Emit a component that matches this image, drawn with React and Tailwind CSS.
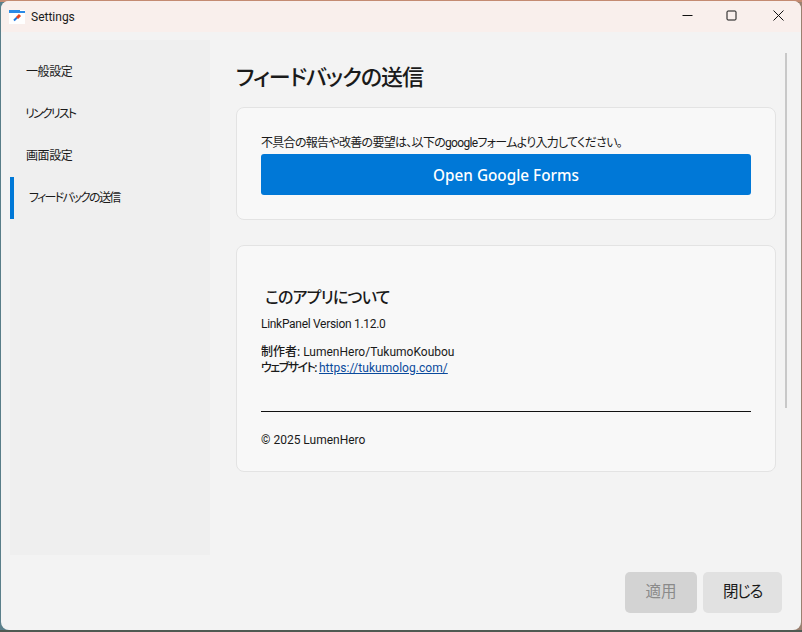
const font = 'Roboto, "Noto Sans CJK JP", sans-serif';

function NavItem({ label, active, tracking, pad }) {
  return (
    <div className="relative h-[42px] flex items-center">
      {active && <div className="absolute left-0 top-0 h-full w-1 bg-[#0078d7]" />}
      <span className={`text-[12px] text-[#1a1a1a] ${tracking} ${pad}`}>{label}</span>
    </div>
  );
}

export default function App() {
  return (
    <div
      className="w-[802px] h-[632px] bg-[linear-gradient(180deg,#c48b72_0,#c48b72_2px,transparent_2px,transparent_630px,#4f5a52_630px),linear-gradient(90deg,#5a7f8a_50%,#9a8070_50%)] p-px pb-[2px] overflow-hidden [font-feature-settings:'palt']"
      style={{ fontFamily: font }}
    >
      <div className="w-full h-full rounded-[8px] overflow-hidden bg-[#f3f3f3] flex flex-col">
        {/* Title bar */}
        <div className="h-[31px] shrink-0 bg-[#f9efec] flex items-center pl-[8px]">
          <svg width="16" height="14" viewBox="0 0 16 14" className="mr-[6px]">
            <rect x="0" y="0" width="16" height="14" fill="#fff" />
            <rect x="0" y="0" width="16" height="3" fill="#2b8ae6" />
            <rect x="11" y="0" width="5" height="1" fill="#fff" />
            <path d="M5 10.5 L8 7.5" stroke="#1e78e0" strokeWidth="2" />
            <path d="M8 8 L11 5" stroke="#e8451f" strokeWidth="3" />
          </svg>
          <span className="text-[12px] text-[#1a1a1a]">Settings</span>
          <div className="ml-auto flex items-center h-full -translate-y-px">
            <div className="w-[45px] h-full flex items-center justify-center -translate-x-px">
              <svg width="11" height="11" viewBox="0 0 11 11"><path d="M0.5 5.5H10.5" stroke="#111" strokeWidth="1" /></svg>
            </div>
            <div className="w-[45px] h-full flex items-center justify-center -translate-x-[2px]">
              <svg width="11" height="11" viewBox="0 0 11 11"><rect x="1" y="1" width="9" height="9" rx="1" fill="none" stroke="#111" strokeWidth="1" /></svg>
            </div>
            <div className="w-[45px] h-full flex items-center justify-center">
              <svg width="11" height="11" viewBox="0 0 11 11"><path d="M0.5 0.5L10.5 10.5M10.5 0.5L0.5 10.5" stroke="#111" strokeWidth="1" /></svg>
            </div>
          </div>
        </div>

        {/* Body */}
        <div className="flex-1 flex min-h-0 relative">
          <div className="w-[200px] h-[515px] shrink-0 ml-[9px] mt-[8px] bg-[#efefef] pt-[11px]">
            <NavItem label="一般設定" tracking="tracking-[-0.4px]" pad="pl-[16px]" />
            <NavItem label="リンクリスト" tracking="tracking-[-1.8px]" pad="pl-[15px]" />
            <NavItem label="画面設定" tracking="tracking-[-0.4px]" pad="pl-[16px]" />
            <NavItem label="フィードバックの送信" tracking="tracking-[-1.7px]" pad="pl-[19px]" active />
          </div>

          <div className="flex-1 flex flex-col min-w-0 pl-[26px] pr-[25px]">
            <h1 className="text-[22px] leading-[30px] font-medium text-[#1a1a1a] mt-[31px] mb-[14px] tracking-[-1px]">フィードバックの送信</h1>

            <div className="h-[113px] rounded-[8px] border border-[#e3e3e3] bg-[#f8f8f8] px-[24px] pt-[25px] mb-[25px]">
              <p className="text-[12px] leading-[21px] text-[#1a1a1a] tracking-[-0.7px]">不具合の報告や改善の要望は、以下のgoogleフォームより入力してください。</p>
              <button className="w-full h-[41px] rounded-[3px] bg-[#0078d7] text-white text-[15.3px] font-medium pt-px [font-family:'Noto_Sans']">Open Google Forms</button>
            </div>

            <div className="h-[227px] rounded-[8px] border border-[#e3e3e3] bg-[#f8f8f8] px-[24px] pt-[40px] text-[12px] leading-[16px] text-[#1a1a1a]">
              <h2 className="text-[16px] leading-[24px] font-medium pl-[4px] tracking-[-0.8px]">このアプリについて</h2>
              <p className="mt-[6px] tracking-[-0.3px]">LinkPanel Version 1.12.0</p>
              <p className="mt-[12px]"><span className="font-medium">制作者:</span> LumenHero/TukumoKoubou</p>
              <p><span className="font-medium tracking-[-1.5px]">ウェブサイト:</span> <a className="text-[#0a4a9c] underline tracking-[0.05px]">https://tukumolog.com/</a></p>
              <div className="h-px bg-[#111] mt-[35px]" />
              <p className="mt-[20px]">© 2025 LumenHero</p>
            </div>

            <div className="mt-auto flex justify-end gap-[6px] mb-[17px] -mr-[6px]">
              <button className="w-[72px] h-[41px] rounded-[5px] bg-[#d3d3d3] text-[15.5px] text-[#8a8a8a]">適用</button>
              <button className="w-[79px] h-[41px] rounded-[5px] bg-[#e1e1e1] text-[15.5px] tracking-[-1.3px] text-[#1a1a1a]">閉じる</button>
            </div>
          </div>

          <div className="absolute left-[784px] top-[21px] w-[2px] h-[355px] bg-[#c8c8c8]" />
        </div>
      </div>
    </div>
  );
}
